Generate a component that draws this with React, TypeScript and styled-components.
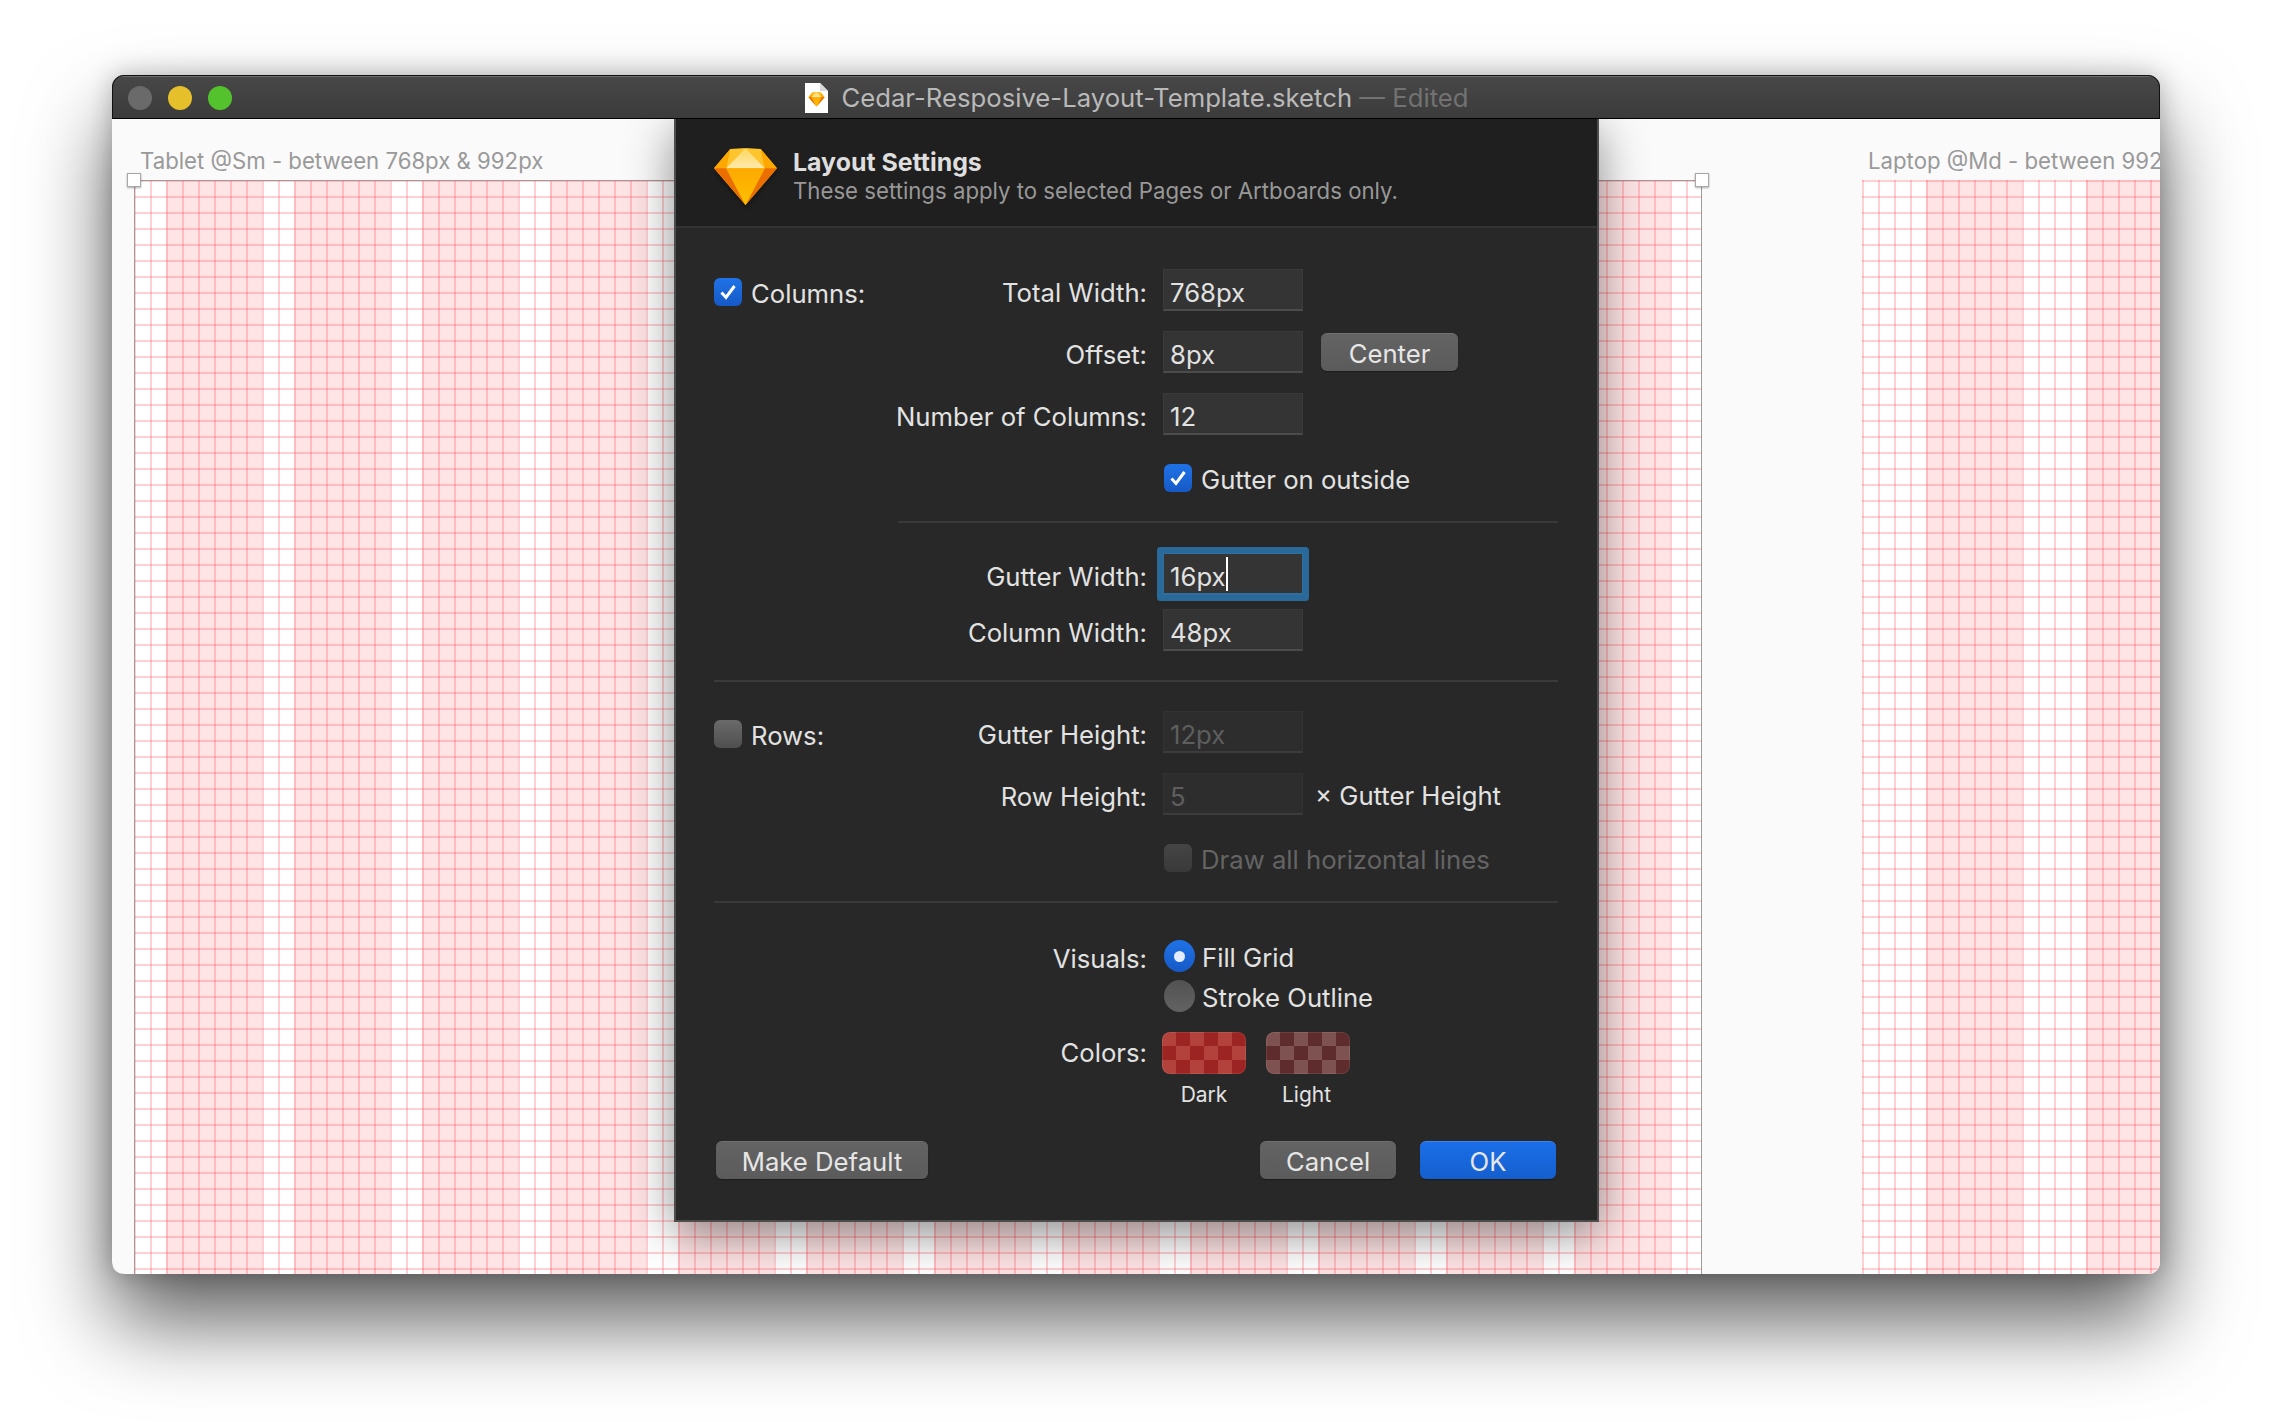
import React from 'react';
import styled, { createGlobalStyle, css } from 'styled-components';

const Global = createGlobalStyle`
  html, body {
    margin: 0;
    background: #fff;
  }
  body {
    font-family: Inter, "Noto Sans", "Liberation Sans", sans-serif;
    -webkit-font-smoothing: antialiased;
  }
`;

const Page = styled.div`
  width: 2272px;
  height: 1422px;
  padding: 75px 0 0 112px;
  box-sizing: border-box;
  overflow: hidden;
`;

const Window = styled.div`
  width: 2048px;
  height: 1199px;
  border-radius: 12px;
  overflow: hidden;
  display: flex;
  flex-direction: column;
  outline: 1px solid #111;
  outline-offset: -1px;
  box-shadow: 0 48px 84px rgba(0, 0, 0, 0.62), 0 0 26px rgba(0, 0, 0, 0.25);
`;

const TitleBar = styled.div`
  height: 44px;
  flex: none;
  box-sizing: border-box;
  display: grid;
  grid-template-columns: 1fr auto 1fr;
  align-items: center;
  padding: 2px 16px 0;
  background: linear-gradient(#484848, #3b3b3b);
  box-shadow: inset 0 2px 0 #6e6e6e;
  border-bottom: 1px solid #000;
`;

const Lights = styled.div`
  display: flex;
  gap: 16px;
`;

const Light = styled.span<{ $color: string }>`
  width: 24px;
  height: 24px;
  border-radius: 50%;
  background: ${(p) => p.$color};
`;

const TitleText = styled.div`
  display: flex;
  align-items: center;
  gap: 13px;
  padding-left: 2px;
  font-size: 25.7px;
  line-height: 32px;
  color: #b9b9b9;
  white-space: nowrap;
`;

const Edited = styled.span`
  color: #727272;
`;

const DocIcon = styled.svg`
  width: 23px;
  height: 30px;
  display: block;
`;

const Canvas = styled.div`
  flex: 1;
  position: relative;
  overflow: hidden;
  background: #fafafa;
`;

const ArtLabel = styled.div<{ $left: number }>`
  position: absolute;
  top: 28px;
  left: ${(p) => p.$left}px;
  font-size: 22.2px;
  color: #999;
  white-space: nowrap;
`;

const Artboard = styled.div<{
  $left: number;
  $width: number;
  $gutter: number;
  $period: number;
  $selected?: boolean;
}>`
  position: absolute;
  top: 61px;
  bottom: -40px;
  left: ${(p) => p.$left}px;
  width: ${(p) => p.$width}px;
  background-color: #fff;
  background-image:
    linear-gradient(90deg, rgba(255, 60, 70, 0.24) 2px, transparent 2px),
    linear-gradient(180deg, rgba(255, 60, 70, 0.24) 2px, transparent 2px),
    repeating-linear-gradient(
      90deg,
      transparent 0,
      transparent ${(p) => p.$gutter}px,
      #ffe4e5 ${(p) => p.$gutter}px,
      #ffe4e5 ${(p) => p.$period}px
    );
  background-size: 16px 100%, 100% 16px, 100% 100%;
  ${(p) =>
    p.$selected &&
    css`
      box-shadow: inset 1px 1px 0 #9c9c9c, inset -1px 0 0 #9c9c9c;
    `}
`;

const Handle = styled.span<{ $side: 'left' | 'right' }>`
  position: absolute;
  top: -7px;
  ${(p) => p.$side}: -7px;
  width: 14px;
  height: 14px;
  box-sizing: border-box;
  background: #fff;
  border: 1px solid #a8a8a8;
  box-shadow: 0 1px 2px rgba(0, 0, 0, 0.3);
`;

const Dialog = styled.div`
  position: absolute;
  top: 0;
  left: 562px;
  width: 925px;
  height: 1103px;
  box-sizing: border-box;
  display: flex;
  flex-direction: column;
  background: #282828;
  border: 2px solid #4d4d4d;
  border-top: none;
  box-shadow: 0 12px 44px rgba(0, 0, 0, 0.45);
  color: #e2e2e2;
  font-size: 25.7px;
`;

const Header = styled.div`
  height: 109px;
  flex: none;
  box-sizing: border-box;
  display: flex;
  align-items: flex-start;
  padding: 29px 0 0 38px;
  gap: 16px;
  background: #1f1f1f;
  border-bottom: 2px solid #333;
`;

const GemIcon = styled.svg`
  width: 63px;
  height: 57px;
  display: block;
  flex: none;
  filter: drop-shadow(0 2px 2px rgba(0, 0, 0, 0.4));
`;

const HeaderText = styled.div`
  display: flex;
  flex-direction: column;
  margin-top: -1px;
`;

const HeaderTitle = styled.div`
  font-size: 24.9px;
  line-height: 30px;
  font-weight: 700;
  color: #dedede;
`;

const HeaderSub = styled.div`
  font-size: 22.2px;
  line-height: 27px;
  color: #989898;
`;

const Row = styled.div<{ $mt: number; $h?: number }>`
  display: grid;
  grid-template-columns: 433px 140px 1fr;
  grid-template-rows: minmax(0, 1fr);
  column-gap: 16px;
  align-items: center;
  margin-top: ${(p) => p.$mt}px;
  height: ${(p) => p.$h ?? 42}px;
  padding-left: 38px;
  flex: none;
`;

const LabelCell = styled.div`
  display: flex;
  justify-content: space-between;
  align-items: center;
`;

const Label = styled.span`
  margin-left: auto;
  padding-top: 5px;
  white-space: nowrap;
`;

const CheckField = styled.div<{ $disabled?: boolean }>`
  display: flex;
  align-items: center;
  gap: 9px;
  white-space: nowrap;
  color: ${(p) => (p.$disabled ? '#646464' : '#e2e2e2')};
`;

const SectionCheck = styled(CheckField)`
  margin-top: 4px;
`;

const CheckText = styled.span`
  padding-top: 3px;
`;

const CheckBox = styled.span<{ $state: 'on' | 'off' | 'disabled' }>`
  width: 28px;
  height: 28px;
  flex: none;
  border-radius: 6px;
  display: flex;
  align-items: center;
  justify-content: center;
  background: ${(p) =>
    p.$state === 'on'
      ? 'linear-gradient(#1f73e6, #1659c6)'
      : p.$state === 'off'
        ? 'linear-gradient(#6a6a6a, #4f4f4f)'
        : 'linear-gradient(#454545, #393939)'};
`;

const Field = styled.div<{ $disabled?: boolean; $focus?: boolean }>`
  height: 42px;
  box-sizing: border-box;
  display: flex;
  align-items: center;
  padding: 5px 0 0 6px;
  background: ${(p) => (p.$disabled ? '#2d2d2d' : '#343434')};
  border: 1px solid ${(p) => (p.$disabled ? '#323232' : '#3a3a3a')};
  border-bottom: 2px solid ${(p) => (p.$disabled ? '#3c3c3c' : '#4c4c4c')};
  color: ${(p) => (p.$disabled ? '#5e5e5e' : '#e2e2e2')};
  ${(p) =>
    p.$focus &&
    css`
      border-color: #2e6f9f;
      border-radius: 1px;
      box-shadow: 0 0 0 6px #2a6a9b;
    `}
`;

const Caret = styled.span`
  width: 2px;
  height: 34px;
  margin-top: -5px;
  background: #fff;
`;

const After = styled.div`
  margin-left: -4px;
  white-space: nowrap;
  padding-top: 3px;
`;

const FullCell = styled.div`
  grid-column: 2 / -1;
  padding-left: 1px;
`;

const Button = styled.div<{ $w: number; $primary?: boolean }>`
  width: ${(p) => p.$w}px;
  height: 38px;
  box-sizing: border-box;
  padding-top: 1px;
  border-radius: 6px;
  display: flex;
  align-items: center;
  justify-content: center;
  color: #e6e6e6;
  background: ${(p) => (p.$primary ? 'linear-gradient(#1a6ee8, #155fce)' : 'linear-gradient(#636363, #5b5b5b)')};
  border-top: 1px solid ${(p) => (p.$primary ? '#3d86ee' : '#6f6f6f')};
  box-shadow: 0 1px 1px rgba(0, 0, 0, 0.35);
`;

const CenterButton = styled(Button)`
  margin-left: 2px;
`;

const Separator = styled.div<{ $ml: number; $mt: number }>`
  height: 2px;
  flex: none;
  margin: ${(p) => p.$mt}px 39px 0 ${(p) => p.$ml}px;
  background: #3a3a3a;
`;

const Radio = styled.span<{ $on?: boolean }>`
  width: 31px;
  height: 32px;
  flex: none;
  border-radius: 50%;
  display: flex;
  align-items: center;
  justify-content: center;
  background: ${(p) => (p.$on ? 'linear-gradient(#1f73e6, #1659c6)' : 'linear-gradient(#525252, #626262)')};
`;

const RadioDot = styled.span`
  width: 11px;
  height: 11px;
  border-radius: 50%;
  background: #e4ecff;
`;

const RadioField = styled.div`
  display: flex;
  align-items: center;
  gap: 7px;
  white-space: nowrap;
`;

const SwatchRow = styled.div`
  display: flex;
  gap: 20px;
  margin-left: -1px;
`;

const SwatchItem = styled.div`
  width: 84px;
  display: flex;
  flex-direction: column;
  align-items: center;
`;

const Swatch = styled.div<{ $a: string; $b: string }>`
  width: 84px;
  height: 42px;
  border-radius: 8px;
  background-color: ${(p) => p.$a};
  background-image: conic-gradient(
    ${(p) => p.$b} 0 25%,
    transparent 0 50%,
    ${(p) => p.$b} 0 75%,
    transparent 0
  );
  background-size: 28px 28px;
  box-shadow: inset 0 0 0 1px rgba(255, 255, 255, 0.09);
`;

const Caption = styled.div<{ $shift?: number }>`
  font-size: 21px;
  line-height: 26px;
  margin-top: 8px;
  margin-left: ${(p) => p.$shift ?? 0}px;
  white-space: nowrap;
`;

const ColorRow = styled(Row)`
  align-items: start;
`;

const ColorLabel = styled(Label)`
  padding-top: 5px;
`;

const Footer = styled.div`
  margin-top: auto;
  margin-bottom: 41px;
  padding: 0 41px 0 40px;
  display: flex;
  justify-content: space-between;
  flex: none;
`;

const FooterRight = styled.div`
  display: flex;
  gap: 24px;
`;

const Gem = () => (
  <>
    <polygon points="16,1 46,1 62,20 31,56 0,20" fill="#fdb300" />
    <polygon points="16,1 31,0 12,20" fill="#fec42e" />
    <polygon points="46,1 31,0 50,20" fill="#fec42e" />
    <polygon points="16,1 0,20 12,20" fill="#fca800" />
    <polygon points="46,1 62,20 50,20" fill="#fca800" />
    <polygon points="31,0 12,20 50,20" fill="url(#gemTop)" />
    <polygon points="0,20 12,20 31,56" fill="#ea6f00" />
    <polygon points="62,20 50,20 31,56" fill="#ea6f00" />
    <polygon points="12,20 50,20 31,56" fill="url(#gemBottom)" />
  </>
);

const GemDefs = () => (
  <defs>
    <linearGradient id="gemTop" x1="0" y1="0" x2="0" y2="1">
      <stop offset="0" stopColor="#fdd95c" />
      <stop offset="1" stopColor="#fee9ad" />
    </linearGradient>
    <linearGradient id="gemBottom" x1="0" y1="0" x2="0" y2="1">
      <stop offset="0" stopColor="#fda900" />
      <stop offset="1" stopColor="#fdc000" />
    </linearGradient>
  </defs>
);

const Check = () => (
  <svg width="20" height="20" viewBox="0 0 20 20" fill="none">
    <path d="M3.5 10.5 L8 15.5 L16.5 4" stroke="#fff" strokeWidth="3" />
  </svg>
);

const App = () => {
  return (
    <Page>
      <Global />
      <Window>
        <TitleBar>
          <Lights>
            <Light $color="#6a6a6a" />
            <Light $color="#e6c02b" />
            <Light $color="#54c22d" />
          </Lights>
          <TitleText>
            <DocIcon viewBox="0 0 23 30">
              <path d="M0 0 H15 L23 8 V30 H0 Z" fill="#fff" />
              <path d="M15 0 L23 8 H15 Z" fill="#d8d8d8" />
              <g transform="translate(3.5 9) scale(0.26)">
                <Gem />
              </g>
            </DocIcon>
            <span>
              Cedar-Resposive-Layout-Template.sketch <Edited>— Edited</Edited>
            </span>
          </TitleText>
        </TitleBar>
        <Canvas>
          <ArtLabel $left={28}>Tablet @Sm - between 768px &amp; 992px</ArtLabel>
          <Artboard $left={22} $width={1568} $gutter={32} $period={128} $selected>
            <Handle $side="left" />
            <Handle $side="right" />
          </Artboard>
          <ArtLabel $left={1756}>Laptop @Md - between 992px &amp; 1200px</ArtLabel>
          <Artboard $left={1750} $width={320} $gutter={64} $period={160} />
          <Dialog>
            <Header>
              <GemIcon viewBox="0 0 62 56">
                <GemDefs />
                <Gem />
              </GemIcon>
              <HeaderText>
                <HeaderTitle>Layout Settings</HeaderTitle>
                <HeaderSub>These settings apply to selected Pages or Artboards only.</HeaderSub>
              </HeaderText>
            </Header>

            <Row $mt={41}>
              <LabelCell>
                <SectionCheck>
                  <CheckBox $state="on">
                    <Check />
                  </CheckBox>
                  <CheckText>Columns:</CheckText>
                </SectionCheck>
                <Label>Total Width:</Label>
              </LabelCell>
              <Field>768px</Field>
            </Row>
            <Row $mt={20}>
              <LabelCell>
                <Label>Offset:</Label>
              </LabelCell>
              <Field>8px</Field>
              <CenterButton $w={137}>Center</CenterButton>
            </Row>
            <Row $mt={20}>
              <LabelCell>
                <Label>Number of Columns:</Label>
              </LabelCell>
              <Field>12</Field>
            </Row>
            <Row $mt={29} $h={28}>
              <span />
              <FullCell>
                <CheckField>
                  <CheckBox $state="on">
                    <Check />
                  </CheckBox>
                  <CheckText>Gutter on outside</CheckText>
                </CheckField>
              </FullCell>
            </Row>

            <Separator $ml={222} $mt={29} />

            <Row $mt={30}>
              <LabelCell>
                <Label>Gutter Width:</Label>
              </LabelCell>
              <Field $focus>
                16px
                <Caret />
              </Field>
            </Row>
            <Row $mt={14}>
              <LabelCell>
                <Label>Column Width:</Label>
              </LabelCell>
              <Field>48px</Field>
            </Row>

            <Separator $ml={38} $mt={29} />

            <Row $mt={29}>
              <LabelCell>
                <SectionCheck>
                  <CheckBox $state="off" />
                  <CheckText>Rows:</CheckText>
                </SectionCheck>
                <Label>Gutter Height:</Label>
              </LabelCell>
              <Field $disabled>12px</Field>
            </Row>
            <Row $mt={20}>
              <LabelCell>
                <Label>Row Height:</Label>
              </LabelCell>
              <Field $disabled>5</Field>
              <After>× Gutter Height</After>
            </Row>
            <Row $mt={29} $h={28}>
              <span />
              <FullCell>
                <CheckField $disabled>
                  <CheckBox $state="disabled" />
                  <CheckText>Draw all horizontal lines</CheckText>
                </CheckField>
              </FullCell>
            </Row>

            <Separator $ml={38} $mt={29} />

            <Row $mt={37} $h={32}>
              <LabelCell>
                <Label>Visuals:</Label>
              </LabelCell>
              <FullCell>
                <RadioField>
                  <Radio $on>
                    <RadioDot />
                  </Radio>
                  <CheckText>Fill Grid</CheckText>
                </RadioField>
              </FullCell>
            </Row>
            <Row $mt={8} $h={32}>
              <span />
              <FullCell>
                <RadioField>
                  <Radio />
                  <CheckText>Stroke Outline</CheckText>
                </RadioField>
              </FullCell>
            </Row>
            <ColorRow $mt={20} $h={80}>
              <LabelCell>
                <ColorLabel>Colors:</ColorLabel>
              </LabelCell>
              <SwatchRow>
                <SwatchItem>
                  <Swatch $a="#b3423d" $b="#9c2523" />
                  <Caption>Dark</Caption>
                </SwatchItem>
                <SwatchItem>
                  <Swatch $a="#7e5250" $b="#5e2c2c" />
                  <Caption $shift={-3}>Light</Caption>
                </SwatchItem>
              </SwatchRow>
            </ColorRow>

            <Footer>
              <Button $w={212}>Make Default</Button>
              <FooterRight>
                <Button $w={136}>Cancel</Button>
                <Button $w={136} $primary>
                  OK
                </Button>
              </FooterRight>
            </Footer>
          </Dialog>
        </Canvas>
      </Window>
    </Page>
  );
};

export default App;
